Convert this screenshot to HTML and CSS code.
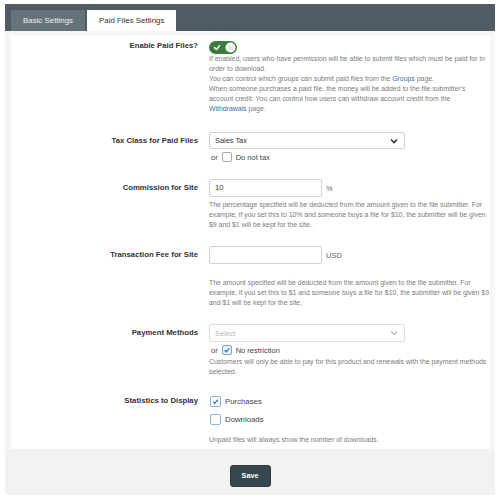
FILE: index.html
```html
<!DOCTYPE html>
<html lang="en">
<head>
  <meta charset="UTF-8">
  <title>Paid Files Settings</title>
  <link rel="stylesheet" href="styles.css">
</head>
<body>
  <div class="page">
    <div class="tabs">
      <div class="tab">Basic Settings</div>
      <div class="tab active">Paid Files Settings</div>
    </div>
    <div class="content">
      <div class="panel">
        <div class="row row-first">
          <div class="label">Enable Paid Files?</div>
          <div class="field">
            <span class="toggle">
              <svg width="28" height="13" viewBox="0 0 28 13">
                <rect x="0" y="0" width="28" height="13" rx="6.5" fill="#3b7d3b"/>
                <path d="M5.5 6.6 L7.4 8.4 L10.6 4.8" fill="none" stroke="#fff" stroke-width="1.5" stroke-linecap="round" stroke-linejoin="round"/>
                <circle cx="21.5" cy="6.5" r="5" fill="#fff"/>
                <path d="M20 4.5 V8.5 M21.5 4.5 V8.5 M23 4.5 V8.5" stroke="#c8c8c8" stroke-width="0.7"/>
              </svg>
            </span>
            <p class="help">If enabled, users who have permission will be able to submit files which must be paid for in order to download.<br>
            You can control which groups can submit paid files from the <a href="#">Groups</a> page.<br>
            When someone purchases a paid file, the money will be added to the file submitter's account credit. You can control how users can withdraw account credit from the <a href="#">Withdrawals</a> page.</p>
          </div>
        </div>

        <div class="row row-tax">
          <div class="label label-box">Tax Class for Paid Files</div>
          <div class="field">
            <div class="select">
              <span>Sales Tax</span>
              <svg width="8" height="6" viewBox="0 0 8 6"><path d="M1 1.5 L4 4.5 L7 1.5" fill="none" stroke="#333" stroke-width="1.6"/></svg>
            </div>
            <div class="or-line">or <span class="check"></span> Do not tax</div>
          </div>
        </div>

        <div class="row">
          <div class="label label-box">Commission for Site</div>
          <div class="field">
            <div class="input-line"><span class="input">10</span><span class="unit">%</span></div>
            <p class="help help-near">The percentage specified will be deducted from the amount given to the file submitter. For example, if you set this to 10% and someone buys a file for $10, the submitter will be given $9 and $1 will be kept for the site.</p>
          </div>
        </div>

        <div class="row">
          <div class="label label-box">Transaction Fee for Site</div>
          <div class="field">
            <div class="input-line"><span class="input"></span><span class="unit">USD</span></div>
            <p class="help help-far">The amount specified will be deducted from the amount given to the file submitter. For example, if you set this to $1 and someone buys a file for $10, the submitter will be given $9 and $1 will be kept for the site.</p>
          </div>
        </div>

        <div class="row">
          <div class="label label-box">Payment Methods</div>
          <div class="field">
            <div class="select select-empty">
              <span>Select</span>
              <svg width="8" height="6" viewBox="0 0 8 6"><path d="M1 1.5 L4 4.5 L7 1.5" fill="none" stroke="#b5b5b5" stroke-width="1.1"/></svg>
            </div>
            <div class="or-line">or <span class="check checked"><svg width="8" height="8" viewBox="0 0 8 8"><path d="M1.6 4.2 L3.3 5.8 L6.4 2.4" fill="none" stroke="#3c78c0" stroke-width="1.3"/></svg></span> No restriction</div>
            <p class="help help-tight">Customers will only be able to pay for this product and renewals with the payment methods selected.</p>
          </div>
        </div>

        <div class="row row-last">
          <div class="label">Statistics to Display</div>
          <div class="field">
            <div class="check-line"><span class="check big checked"><svg width="9" height="9" viewBox="0 0 9 9"><path d="M2 4.6 L3.8 6.3 L7 2.8" fill="none" stroke="#3c78c0" stroke-width="1.3"/></svg></span> Purchases</div>
            <div class="check-line"><span class="check big focus"></span> Downloads</div>
            <p class="help help-stats">Unpaid files will always show the number of downloads.</p>
          </div>
        </div>
      </div>
    </div>
    <div class="footer">
      <button class="save">Save</button>
    </div>
  </div>
</body>
</html>
```

FILE: styles.css
```css
body { margin: 0; background: #fff; font-family: "Liberation Sans", Arial, sans-serif; color: #333; }
.page { width: 490px; margin: 4px 0 0 5px; }

.tabs { display: flex; gap: 2px; height: 27px; padding: 6px 0 0 6px; box-sizing: border-box; background: #4f5c63; }
.tab { height: 21px; line-height: 21px; padding: 0 12px; font-size: 7.9px; color: #eef1f2; background: #66737a; }
.tab.active { background: #fff; color: #333; padding: 0 12px; }

.content { background: #f6f6f6; padding: 5px 5px 0 6px; }
.panel { background: #fff; padding: 0 1px 4px 0; }

.row { display: grid; grid-template-columns: 187px 1fr; column-gap: 11px; padding-top: 16px; }
.row-first { padding-top: 5px; }
.row-tax { padding-top: 18px; }
.row-last { padding-top: 20px; }

.label { text-align: right; font-weight: bold; font-size: 7.75px; line-height: 9px; color: #333; }
.label-box { line-height: 17px; }
.row-last .label { padding-top: 0; line-height: 10px; }

.toggle { display: block; height: 13px; }
.toggle svg { display: block; }

.help { margin: 0; font-size: 6.9px; line-height: 10px; color: #7b7b7b; }
.help a { color: #3a6fa8; text-decoration: none; }
.help-near { margin-top: 3px; }
.help-far { margin-top: 14px; }
.help-tight { line-height: 9.5px; margin-top: 1px; }
.help-stats { margin-top: 11px; }

.select { display: flex; align-items: center; justify-content: space-between; width: 196px; height: 17px; box-sizing: border-box; padding: 0 6px 0 5px; border: 1px solid #cfcfcf; border-radius: 2px; font-size: 7.4px; color: #333; background: #fff; }
.select svg { display: block; }
.select-empty { height: 18px; border-color: #dedede; color: #b8b8b8; }

.or-line { margin-top: 2px; height: 12px; display: flex; align-items: center; gap: 3px; padding-left: 2px; font-size: 7.5px; color: #444; }
.check { display: inline-flex; align-items: center; justify-content: center; width: 8px; height: 8px; border: 1px solid #a9a9a9; border-radius: 2px; background: #fff; margin: 0 1px; }
.check.checked { border-color: #7aa3d3; background: #eef4fb; }
.check.big { width: 9px; height: 9px; border-radius: 2px; }
.check.big.checked { background: #fff; border-color: #8fb0d6; }
.check.focus { border-color: #8fb3dc; }
.check svg { display: block; }

.input-line { display: flex; align-items: center; gap: 4px; font-size: 7.5px; color: #555; }
.input { display: block; width: 113px; height: 18px; box-sizing: border-box; border: 1px solid #d2d2d2; border-radius: 2px; padding: 0 5px; line-height: 16px; font-size: 7.6px; color: #333; }
.unit { color: #666; }

.check-line { display: flex; align-items: center; gap: 4px; height: 10px; margin-bottom: 8px; font-size: 7.8px; color: #444; }
.check-line .check { margin: 0 0 0 1px; }

.footer { background: #f2f2f2; padding: 15px 0 8px; text-align: center; }
.save { width: 41px; height: 22px; border: 1px solid #2c393f; border-radius: 3px; background: #37474f; color: #fff; font-family: "Liberation Sans", Arial, sans-serif; font-weight: bold; font-size: 7.2px; cursor: pointer; padding: 0; }
```
